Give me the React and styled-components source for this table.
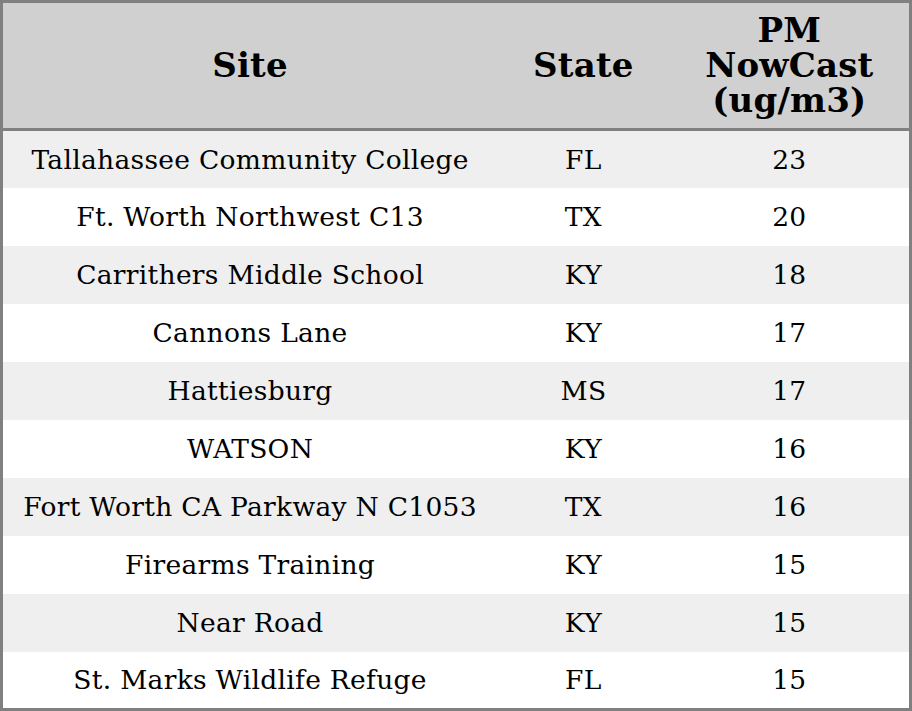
import React from "react";
import styled, { createGlobalStyle } from "styled-components";

const GlobalStyle = createGlobalStyle`
  html, body {
    margin: 0;
    padding: 0;
    background: #ffffff;
  }
`;

const Table = styled.table`
  width: 912px;
  height: 711px;
  border-collapse: collapse;
  table-layout: fixed;
  border: 3px solid #808080;
  font-family: "DejaVu Serif", serif;
  color: #000;
`;

const HeadRow = styled.tr`
  height: 128px;
  background: #d0d0d0;
  border-bottom: 3px solid #808080;
`;

const Th = styled.th`
  box-sizing: border-box;
  font-size: 34px;
  font-weight: bold;
  line-height: 35px;
  text-align: center;
  vertical-align: middle;
  padding: 0;
  letter-spacing: 0.2px;
  width: ${(p) => p.$w}px;
`;

const Row = styled.tr`
  height: 58px;
  background: ${(p) => (p.$striped ? "#efefef" : "#ffffff")};
`;

const Td = styled.td`
  font-size: 26.5px;
  text-align: center;
  vertical-align: middle;
  padding: 0;
  letter-spacing: 0.3px;
`;

const rows = [
  ["Tallahassee Community College", "FL", 23],
  ["Ft. Worth Northwest C13", "TX", 20],
  ["Carrithers Middle School", "KY", 18],
  ["Cannons Lane", "KY", 17],
  ["Hattiesburg", "MS", 17],
  ["WATSON", "KY", 16],
  ["Fort Worth CA Parkway N C1053", "TX", 16],
  ["Firearms Training", "KY", 15],
  ["Near Road", "KY", 15],
  ["St. Marks Wildlife Refuge", "FL", 15],
];

const App = () => (
  <>
    <GlobalStyle />
    <Table>
      <thead>
        <HeadRow>
          <Th $w={494}>Site</Th>
          <Th $w={172}>State</Th>
          <Th $w={240}>
            PM
            <br />
            NowCast
            <br />
            (ug/m3)
          </Th>
        </HeadRow>
      </thead>
      <tbody>
        {rows.map(([site, state, pm], i) => (
          <Row key={site} $striped={i % 2 === 0}>
            <Td>{site}</Td>
            <Td>{state}</Td>
            <Td>{pm}</Td>
          </Row>
        ))}
      </tbody>
    </Table>
  </>
);

export default App;
